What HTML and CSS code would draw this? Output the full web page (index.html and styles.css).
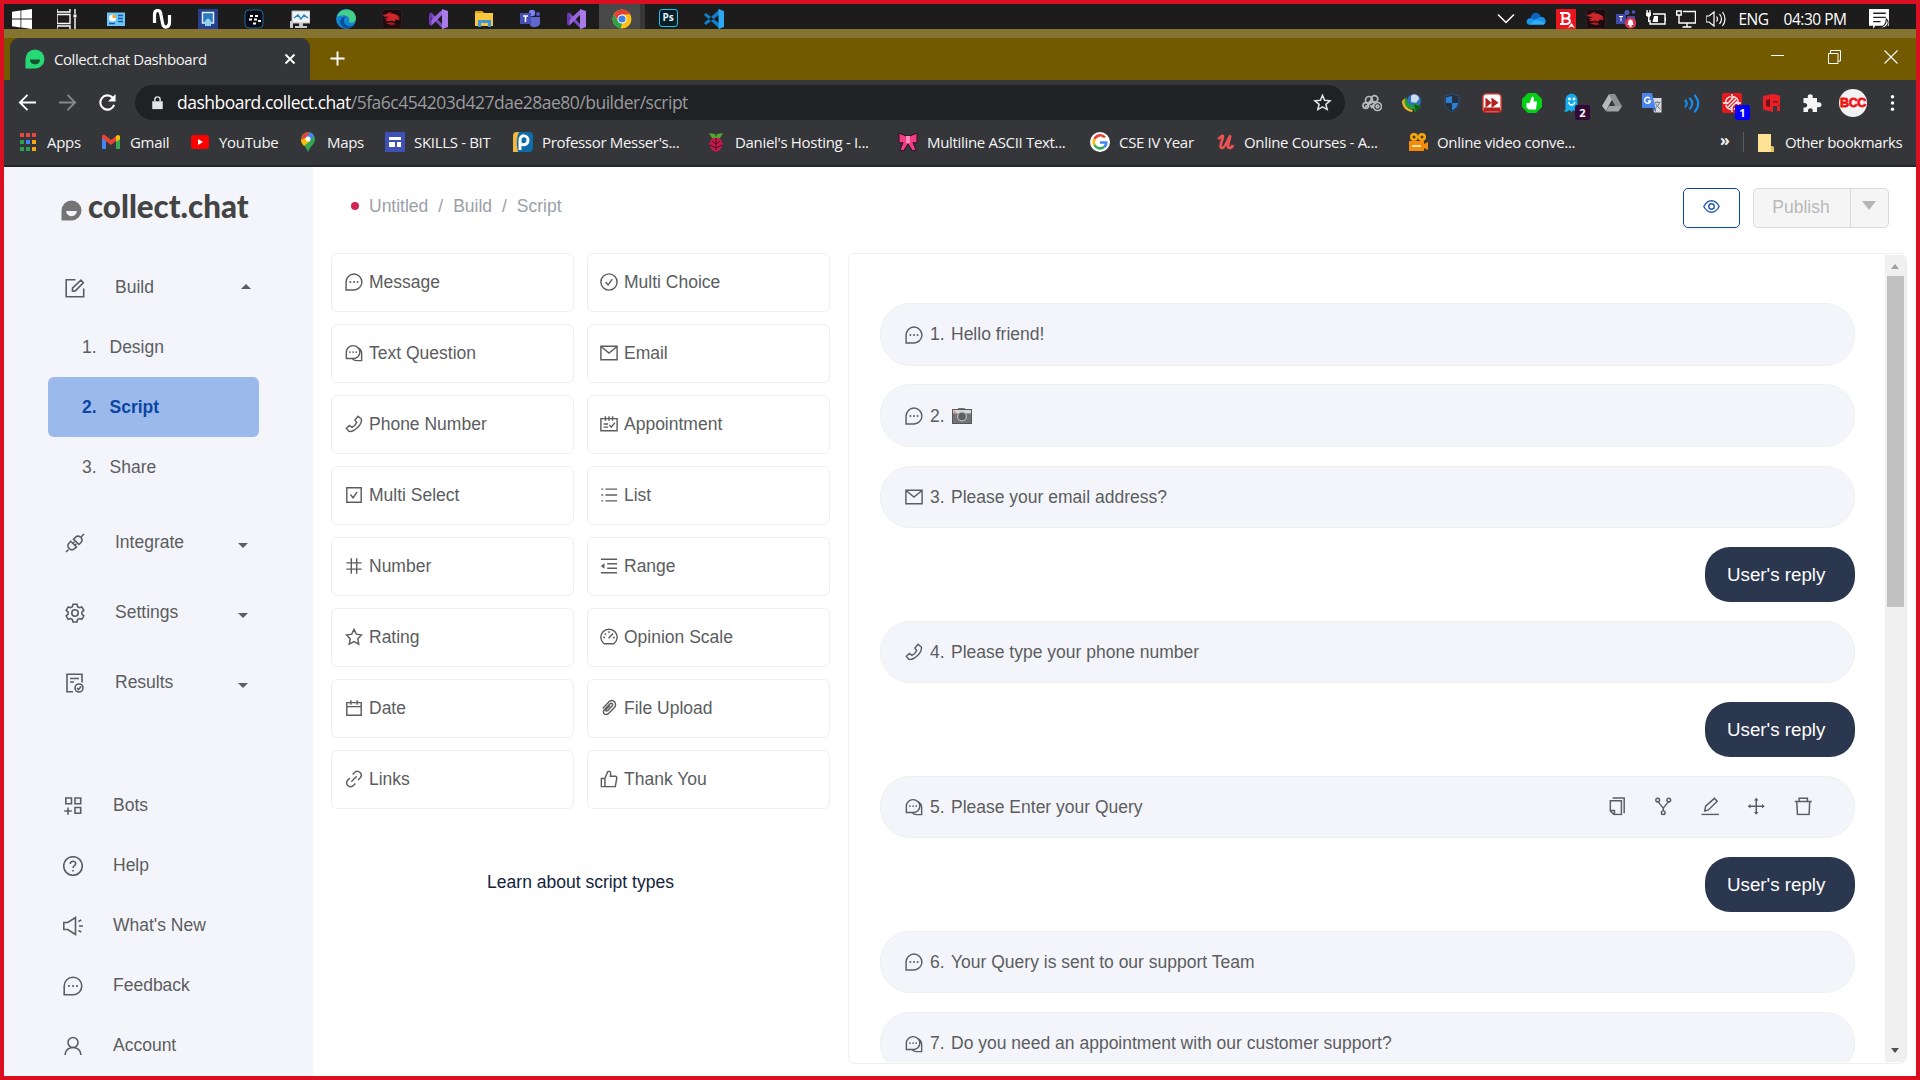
FILE: index.html
```html
<!DOCTYPE html>
<html lang="en">
<head>
<meta charset="utf-8">
<title>Collect.chat Dashboard</title>
<link rel="stylesheet" href="styles.css">
</head>
<body>
<svg class="sprite" aria-hidden="true">
  <symbol id="message" viewBox="0 0 20 20"><path d="M1.2 18.8V10a8.8 8.8 0 1 1 8.8 8.8z" class="ln"/><circle cx="6" cy="10" r="1.100" class="fl"/><circle cx="10" cy="10" r="1.100" class="fl"/><circle cx="14" cy="10" r="1.100" class="fl"/></symbol>
  <symbol id="comments" viewBox="0 0 20 20"><path d="M1.500 16.200V9.300a7.500 7.200 0 1 1 7.500 6.900zM14.500 4A8 8 0 0 1 18.500 11.500v7H13a7 6 0 0 1-5-2" class="ln"/><circle cx="5.500" cy="9" r="1" class="fl"/><circle cx="9" cy="9" r="1" class="fl"/><circle cx="12.500" cy="9" r="1" class="fl"/></symbol>
  <symbol id="check-circle" viewBox="0 0 20 20"><circle cx="10" cy="10" r="9" class="ln"/><path d="M6.300 10l2.700 3.200 4.700-6.400" class="ln"/></symbol>
  <symbol id="mail" viewBox="0 0 20 20"><path d="M1 2.500h18v15H1zM1.500 3L10 10l8.500-7" class="ln"/></symbol>
  <symbol id="phone" viewBox="0 0 20 20"><path d="M14.500 1.500l3.700 3c1.200 5.700-8 14.700-13.800 13.700l-2.900-3.400 3.500-3.100 2.800 2c2-1 4.200-3.100 5.200-5.300l-2-2.900z" class="ln"/></symbol>
  <symbol id="schedule" viewBox="0 0 20 20"><path d="M1 4h18v13.500H1zM6 1.500v5M10 1.500v5M14 1.500v5M4 10h5M4 13.500h5M10.500 11l2 2.500 4-5" class="ln"/></symbol>
  <symbol id="check-square" viewBox="0 0 20 20"><path d="M2 2h16v16H2zM6 9.500l3 3.500 4.500-6.500" class="ln"/></symbol>
  <symbol id="list" viewBox="0 0 20 20"><path d="M6 3.500h13M6 10h13M6 16.500h13M1.500 3.500h2M1.500 10h2M1.500 16.500h2" class="ln"/></symbol>
  <symbol id="number" viewBox="0 0 20 20"><path d="M1.500 6.500h17M1.500 13.500h17M7 1.500v17M13 1.500v17" class="ln"/></symbol>
  <symbol id="outdent" viewBox="0 0 20 20"><path d="M1 2.500h18M8 7.500h11M8 12.500h11M1 17.500h18" class="ln"/><path d="M1 10l4-3v6z" class="fl"/></symbol>
  <symbol id="star" viewBox="0 0 20 20"><path d="M10 1.500l2.600 5.400 5.900.8-4.300 4.200 1.100 6L10 15.100l-5.300 2.800 1.100-6L1.500 7.700l5.900-.8z" class="ln"/></symbol>
  <symbol id="gauge" viewBox="0 0 20 20"><path d="M4.500 17.500A9 9 0 1 1 15.500 17.500zM10 3.500v2M3.500 10.500h2M14.500 10.500h2M5.300 6l1.400 1.400M9.500 11.500l5-5.500" class="ln"/></symbol>
  <symbol id="calendar" viewBox="0 0 20 20"><path d="M2 4h16v14H2zM2 8.500h16M6.500 1.500v5M13.500 1.500v5" class="ln"/></symbol>
  <symbol id="clip" viewBox="0 0 20 20"><path d="M8.500 13l5-5.500c1.500-2-.8-3.700-2.300-2.200l-6.500 7c-2.500 3.700 1.500 6.500 4.500 4L16 9.500C19.500 4.500 14.500-.5 10 3L3 10.500M8.500 13c-1.600 1-2.700-.3-1.500-1.700l4-4" class="ln"/></symbol>
  <symbol id="link" viewBox="0 0 20 20"><path d="M8.500 5l2.700-2.700c3.800-3 9 2 6 6L14.500 11M11.500 15l-2.700 2.700c-3.800 3-9-2-6-6L5.500 9M7 13l6-6" class="ln"/></symbol>
  <symbol id="like" viewBox="0 0 20 20"><path d="M1.500 9.500h4l3-7.500c2-1.500 3.500 0 3.300 2L11.500 7H17c1.500 0 2 1.500 1.500 3l-1.500 8.500H1.500zM5.500 9.500V18" class="ln"/></symbol>
  <symbol id="form" viewBox="0 0 20 20"><path d="M10.500 1.800H1.200v17h17.500V10.500M7.500 13.200v-3l8.500-8 2.300 2.500-8 8.200z" class="ln"/></symbol>
  <symbol id="api" viewBox="0 0 20 20"><path d="M5.800 8.300L4 10.200c-3.500 3.300 2 8.800 5.500 5.500l2-1.800zM8.500 6.200l2-2c3.500-3.500 8.500 2 5.500 5.300l-2 2zM1 19l2.500-2.500M16.300 3.700L19 1M7.800 10.500l1.700-1.700M9.800 12.500l1.700-1.700" class="ln"/></symbol>
  <symbol id="gear" viewBox="0 0 20 20"><path d="M8 1.200h4l.6 2.500 1.800 1 2.400-.8 2 3.400-1.900 1.800v2l1.900 1.800-2 3.400-2.400-.8-1.800 1-.6 2.500H8l-.6-2.500-1.800-1-2.400.8-2-3.400 1.900-1.800v-2L1.200 7.300l2-3.400 2.400.8 1.800-1z" class="ln"/><circle cx="10" cy="10" r="3.200" class="ln"/></symbol>
  <symbol id="results" viewBox="0 0 20 20"><path d="M8 18.800H2V1.200h15v8.300M5 5.500h9M5 9h4" class="ln"/><circle cx="14" cy="15" r="4" class="ln"/><path d="M12 15l1.500 1.500 2.500-3" class="ln"/></symbol>
  <symbol id="apps" viewBox="0 0 20 20"><path d="M2.800 2h5.700v5.700H2.800zM12 2h5.700v5.700H12zM12 11.500h5.700v5.700H12zM5 11.500v7.200M1.200 15h7.500" class="ln"/></symbol>
  <symbol id="help" viewBox="0 0 20 20"><circle cx="10" cy="10" r="9.300" class="ln"/><path d="M7.300 8c0-3.800 5.600-3.500 5.400-.2C12.600 9.700 10 9.600 10 12" class="ln"/><circle cx="10" cy="14.700" r=".9" class="fl"/></symbol>
  <symbol id="horn" viewBox="0 0 20 20"><path d="M.8 6.500h4L12.500 1.500v17l-7.700-5h-4zM16 10h4M15.500 5.500L18.300 4M15.500 14.500l2.800 1.500" class="ln"/></symbol>
  <symbol id="user" viewBox="0 0 20 20"><circle cx="10" cy="6.500" r="5" class="ln"/><path d="M2 19c0-10 16-10 16 0" class="ln"/></symbol>
  <symbol id="eye" viewBox="0 0 20 20"><path d="M1 10c4.500-9 13.500-9 18 0-4.500 9-13.500 9-18 0z" class="ln"/><circle cx="10" cy="10" r="3.200" class="ln"/></symbol>
  <symbol id="copy" viewBox="0 0 20 20"><path d="M2.500 4h12v15h-8l-4-4zM2.500 14.500h4.500V19M5 1.200h12.500V17.500" class="ln"/></symbol>
  <symbol id="branch" viewBox="0 0 20 20"><circle cx="4" cy="3.300" r="2" class="ln"/><circle cx="16" cy="3.300" r="2" class="ln"/><circle cx="10" cy="17" r="2" class="ln"/><path d="M4.500 5.300L10 12l5.500-6.700M10 12v3" class="ln"/></symbol>
  <symbol id="edit" viewBox="0 0 20 20"><path d="M.5 18.800h19M4 15l1-5 9.500-8.500 3 3L8 14z" class="ln"/></symbol>
  <symbol id="move" viewBox="0 0 20 20"><path d="M10 2v16M2 10h16" class="ln"/><path d="M10 .8l2.500 3h-5zM10 19.200l2.500-3h-5zM.8 10l3-2.500v5zM19.200 10l-3-2.500v5z" class="fl"/></symbol>
  <symbol id="trash" viewBox="0 0 20 20"><path d="M.8 4.800h18.400M3 4.800l.7 14h12.600l.7-14M5.500 4.500V1.300h9v3.200" class="ln"/></symbol>
  <symbol id="vs" viewBox="0 0 20 20"><path d="M1 5l2.500-1.500 11 12L20 17.500 15 20 1 6z" fill="#7a4bc0"/><path d="M1 15l2.500 1.500L15 5V0L1 13z" fill="#9a66e0"/><path d="M1 5v10l2.500 1.500v-13z" fill="#6a35b0"/><path d="M14 0l6 2v16l-6 2z" fill="#a87be8"/></symbol>
  <symbol id="dragon" viewBox="0 0 20 20"><rect x=".5" y=".5" width="19" height="19" rx="2.500" fill="#1c0c0f" stroke="#38191c"/><path d="M1 6c4 0 5-3 9-3l-2 1.500c4-.5 8 1.500 10 4l-3 0c2 .5 2 1.500 3 2.500l-5-.500c1 2-1 2.500-2 1.500-3-1-5 1-8 0l3-1.500-4-.500 5-2-5-.500z" fill="#d2262c"/><path d="M4 15c3-3 9-2 10 1-2-1-3 0-4 .5-2-1.500-4-1.500-6-1.500z" fill="#a81c22"/></symbol>
  <symbol id="bubble" viewBox="0 0 20 20"><path d="M.5 19.500V10A9.500 9.500 0 1 1 10 19.500z" fill="currentColor"/><path d="M5 10.500h10c0 6.500-10 6.500-10 0z" fill="var(--mouth)"/></symbol>
</svg>

<div class="screen">
  <div class="taskbar">
    <div class="tasks">
      <span class="task start"><svg viewBox="0 0 20 20"><path d="M0 2.800l8.500-1.200v8H0zM9.300 1.500L20 0v9.600H9.300zM0 10.400h8.500v8L0 17.200zM9.300 10.400H20V20L9.300 18.500z" fill="#fff"/></svg></span>
      <span class="task view"><svg viewBox="0 0 20 20"><path d="M0 0v3h13V0M0 20v-3h13v3M0 5.500h13v9H0zM18 0v5M18 9v11" fill="none" stroke="#fff" stroke-width="1.400"/><path d="M16.500 5.500h3v3h-3z" fill="#fff"/></svg></span>
      <span class="task"><svg viewBox="0 0 20 20"><path d="M1 3.500h18v13.500H1z" fill="#6cc5f4"/><circle cx="6.500" cy="9" r="3.500" fill="#fff"/><path d="M6.500 9V5.500A3.500 3.500 0 0 1 10 9z" fill="#f3a51e"/><path d="M12 6.500h5M12 9.500h5M12 12.500h5M3 14.500h6" stroke="#155a9c" stroke-width="1.300"/></svg></span>
      <span class="task"><svg viewBox="0 0 20 20"><path d="M2.500 14V6c0-6 6-6 6.500 0l1.500 8c1 6 7 5 7-1V6" fill="none" stroke="#fff" stroke-width="3.200"/></svg></span>
      <span class="task"><svg viewBox="0 0 20 20"><path d="M0 0h20v20H0z" fill="#273f8f"/><path d="M4.500 3.500h11V14h-11z" fill="#2a77bd" stroke="#dcebfa" stroke-width="1.500"/><path d="M7 17v-5l3-3 3 3v5z" fill="#8fd3f0"/></svg></span>
      <span class="task"><svg viewBox="0 0 20 20"><rect x="1" y="1" width="18" height="18" rx="4" fill="#080b16" stroke="#21659a"/><path d="M6 6h3v2H6zM11 6h3v2h-3zM5 9.500h3v2H5zM10 9.500h3v2h-3zM14 11h3v2h-3zM9 13.500h3v2H9z" fill="#fff"/></svg></span>
      <span class="task"><svg viewBox="0 0 20 20"><path d="M2 2h18v12H2z" fill="#f2f2f2" stroke="#b9b9b9"/><path d="M4 9l4-3 3 4 3-4 4 3" fill="none" stroke="#2587c9" stroke-width="1.500"/><path d="M9 14h4v3h4v2H5v-2h4zM0 12h3v7H0z" fill="#c7cbcd"/></svg></span>
      <span class="task"><svg viewBox="0 0 20 20"><circle cx="10" cy="10" r="10" fill="#1684cf"/><path d="M1 8C4-2 19-2 20 9c0 5-7 6-7 3 2-5-6-8-12-4z" fill="#45cf8b"/><path d="M8 10c-1 6 5 9 9 6-4 7-14 2-13-4 1-4 5-5 7-4-2 0-3 1-3 2z" fill="#0b4f9e"/></svg></span>
      <span class="task"><svg><use href="#dragon"/></svg></span>
      <span class="task"><svg><use href="#vs"/></svg></span>
      <span class="task"><svg viewBox="0 0 20 20"><path d="M1 2h7l2 2h9v13H1z" fill="#f9c73d"/><path d="M1 2h7l1.500 2H1z" fill="#e49b0e"/><path d="M4 18v-7h13v7h-3v-4H7v4z" fill="#3f93dd"/></svg></span>
      <span class="task"><svg viewBox="0 0 20 20"><circle cx="12" cy="4" r="3.200" fill="#7b83eb"/><circle cx="18" cy="5" r="2" fill="#5059c9"/><path d="M10 8h10v6c0 4-8 6-10 2z" fill="#6068cf"/><path d="M0 4h11v11H0z" fill="#464eb8"/><path d="M3 7h5M5.500 7v6" stroke="#fff" stroke-width="1.500"/></svg></span>
      <span class="task"><svg><use href="#vs"/></svg></span>
      <span class="task task-active"><svg viewBox="0 0 20 20"><circle cx="10" cy="10" r="9.500" fill="#fbc116"/><path d="M1.800 5.200A9.500 9.500 0 0 1 18.200 5.200L10 5.500 6 12z" fill="#e34133"/><path d="M1.800 5.200L6 12.300 10 14.500 8.700 19.400A9.500 9.500 0 0 1 1.800 5.200z" fill="#2da04b"/><circle cx="10" cy="10" r="4.600" fill="#fff"/><circle cx="10" cy="10" r="3.600" fill="#3f7fe8"/></svg></span>
      <span class="task"><span class="ps">Ps</span></span>
      <span class="task"><svg viewBox="0 0 20 20"><path d="M0 6l2-2 14 11v5zM0 14l2 2L16 5V0z" fill="#1180cb"/><path d="M14.500 0L20 2v16l-5.500 2z" fill="#2fa8f3"/></svg></span>
    </div>
    <div class="tray">
      <span class="tray-cell"><svg viewBox="0 0 20 20"><path d="M2 5.500l8 8 8-8" fill="none" stroke="#fff" stroke-width="1.500"/></svg></span>
      <span class="tray-cell"><svg viewBox="0 0 20 20"><path d="M3 15.500c-4-1-3-7 1.500-6.500C6 2.500 13 2 15 8c5 0 6 6 2.500 7.500z" fill="#0c63bd"/><path d="M3 15.500c-3-.5-3-5 1-6l5 1 6-2.500c5 0 6 6 2.500 7.500z" fill="#1f93e4"/><path d="M3 15.500l7-4.500 9 3-1.500 1.500z" fill="#2fb0f5"/></svg></span>
      <span class="tray-cell"><svg viewBox="0 0 20 20"><path d="M0 0h20v20H0z" fill="#e8171f"/><path d="M4 4h6.500c4 0 4 5 0 5.500 5 .5 4 5.500 0 5.500H4M6.500 4v11M6.500 9.500h4" fill="none" stroke="#fff" stroke-width="2"/><path d="M12 19l3.500-5 3.500 5-3.500-1.500z" fill="#fff"/></svg></span>
      <span class="tray-cell"><svg><use href="#dragon"/></svg></span>
      <span class="tray-cell"><svg viewBox="0 0 20 20"><circle cx="11" cy="3.500" r="2.500" fill="#4e56c0"/><circle cx="17.500" cy="3" r="1.800" fill="#4e56c0"/><path d="M0 5h10v10H0zM11 7h8v7h-8z" fill="#4048a8"/><path d="M3 7.500h4M5 7.500v5" stroke="#fff"/><circle cx="14.500" cy="14" r="5.800" fill="#d1344e"/><path d="M11.300 16c1.200-1 0-5.500 3.200-5.500s2 4.500 3.200 5.500z" fill="#fff"/><circle cx="14.500" cy="17" r="1.200" fill="#fff"/></svg></span>
      <span class="tray-cell"><svg viewBox="0 0 20 20"><path d="M7 5h12v10H4v-4" fill="none" stroke="#fff" stroke-width="1.400"/><path d="M19 8.500h1.500v3.500H19zM8 7h4v6H6.500zM0 3.500h5v3L3.500 8v5H2V8L0 6.500zM.5 1h1.300v3H.5zM3.300 1h1.300v3H3.300z" fill="#fff"/></svg></span>
      <span class="tray-cell"><svg viewBox="0 0 20 20"><path d="M7 2.500h12.500V14H3V8.500M11 14v3.500M6.500 18h9M.7 2h4.500v4H.7zM3 6v3" fill="none" stroke="#fff" stroke-width="1.400"/></svg></span>
      <span class="tray-cell"><svg viewBox="0 0 20 20"><path d="M0 7h3l5-4v14l-5-4H0zM10.500 7.500q2 2.500 0 5M13.500 5q4 5 0 10M16.500 3q5 7 0 14" fill="none" stroke="#fff" stroke-width="1.200"/></svg></span>
      <span class="lang">ENG</span>
      <span class="clock">04:30 PM</span>
      <span class="notice"><svg viewBox="0 0 20 20"><path d="M0 0h19v16H6l-2 3v-3H0z" fill="#fff"/><path d="M4 4h12M4 8h12M4 12h7" stroke="#222" stroke-width="1.300"/><path d="M16.500 9.500c4 4 0 10-7 8.500 5-1 7-4.500 7-8.500z" fill="#fff" stroke="#222"/></svg></span>
    </div>
  </div>

  <div class="tabstrip">
    <div class="tab">
      <svg class="tab-logo"><use href="#bubble"/></svg>
      <span class="tab-title">Collect.chat Dashboard</span>
      <svg class="tab-close" viewBox="0 0 12 12"><path d="M1.500 1.500l9 9M10.500 1.500l-9 9" stroke="#fff" stroke-width="1.900"/></svg>
    </div>
    <svg class="tab-new" viewBox="0 0 16 16"><path d="M8 .5v15M.5 8h15" stroke="#fff" stroke-width="2"/></svg>
    <div class="window-buttons">
      <svg viewBox="0 0 14 14"><path d="M1 5.500h13" stroke="#fff"/></svg>
      <svg viewBox="0 0 14 14"><path d="M1.500 3.500H11V13.500H1.500zM3.500 3.500V.5H13.500v10.500h-2.500" fill="none" stroke="#fff"/></svg>
      <svg viewBox="0 0 14 14"><path d="M.5.5l13 13M13.500.5l-13 13" stroke="#fff" stroke-width="1.100"/></svg>
    </div>
  </div>

  <div class="toolbar">
    <div class="nav">
      <svg viewBox="0 0 20 20"><path d="M19 10H3M10 2l-8 8 8 8" fill="none" stroke="#fff" stroke-width="2"/></svg>
      <svg viewBox="0 0 20 20"><path d="M1 10h16M10 2l8 8-8 8" fill="none" stroke="#85878a" stroke-width="2"/></svg>
      <svg viewBox="0 0 20 20"><path d="M17 12.500A7.500 7.500 0 1 1 15.500 5" fill="none" stroke="#fff" stroke-width="2.200"/><path d="M18.500 1v8h-8z" fill="#fff"/></svg>
    </div>
    <div class="omnibox">
      <svg class="lock" viewBox="0 0 12 16"><path d="M0 6h12v9H0z" fill="#e3e4e6"/><path d="M3 6V4c0-4 6-4 6 0v2" fill="none" stroke="#e3e4e6" stroke-width="1.600"/></svg>
      <span class="url"><span class="host">dashboard.collect.chat</span>/5fa6c454203d427dae28ae80/builder/script</span>
      <svg class="fav" viewBox="0 0 20 20"><path d="M10 2.500l2.200 5.200 5.700.5-4.300 3.700 1.300 5.500-4.900-2.900-4.900 2.900 1.300-5.500-4.300-3.700 5.700-.5z" fill="none" stroke="#e3e4e6" stroke-width="1.600"/></svg>
    </div>
    <div class="extensions">
      <span class="ext"><svg viewBox="0 0 20 20"><g fill="none" stroke="#b9babc" stroke-width="1.700"><circle cx="3.800" cy="12.500" r="2.800"/><circle cx="7" cy="7" r="3.500"/><circle cx="12.500" cy="6" r="3.300"/><circle cx="15.500" cy="13.500" r="4"/><circle cx="15.500" cy="13.500" r="1.300"/><path d="M5 11c3-2 4-3 5-5M8 13c3 0 5-2 5-5M3 14l7-5M9 15l3-2"/></g></svg></span>
      <span class="ext"><svg viewBox="0 0 20 20"><circle cx="12" cy="8" r="7" fill="#2f6fc4"/><path d="M9 3c3-3 8-1 8 3l-3 4-5-1z" fill="#c9dcea"/><path d="M2 7l3-3c-1 6 3 9 8 8l-1-3 7 5-6 5-1-3C6 17 1 13 2 7z" fill="#1f9d2f"/><path d="M0 8l3-3c-2 7 2 11 8 12l-1 2C4 18 0 14 0 8z" fill="#f0b52c"/><path d="M12 11l7 3-5 5z" fill="#0a6216"/></svg></span>
      <span class="ext"><svg viewBox="0 0 20 20"><path d="M10 1l7 2v7c0 4-3 7-7 9-4-2-7-5-7-9V3z" fill="#23303f" stroke="#284f7d"/><path d="M10 3v7H4V4.500zM10 10h6c0 3-2.500 5.500-6 7.500z" fill="#2d7fd0"/></svg></span>
      <span class="ext"><svg viewBox="0 0 20 20"><rect x=".8" y=".8" width="18.400" height="18.400" rx="3.500" fill="#fff" stroke="#c9302c" stroke-width="1.600"/><path d="M2 14.500h16v4H2z" fill="#b3201f"/><path d="M3.500 4.500l6 5.300-6 5.200zM9.500 4.500l7 5.300-7 5.200z" fill="#b3201f"/></svg></span>
      <span class="ext"><svg viewBox="0 0 20 20"><path d="M6 0h8l6 6v8l-6 6H6l-6-6V6z" fill="#05d016"/><path d="M4.500 10h3L10 3.500c2.500 0 2 3 1.500 5H15l-1 8H7l-2.500-2z" fill="#fff"/></svg></span>
      <span class="ext"><svg viewBox="0 0 20 20"><path d="M3.500 17V7.500c0-9 12-9 12 0V15l3 3-4 1-3-2-2 2-2-2-3 2-3-1z" fill="#16adef"/><circle cx="7.500" cy="6" r="1.400" fill="#fff"/><circle cx="12" cy="6" r="1.400" fill="#fff"/><path d="M6.500 9c1 4 5 4 6.500 0" fill="none" stroke="#fff" stroke-width="1.300"/></svg><b class="count count-purple">2</b></span>
      <span class="ext"><svg viewBox="0 0 20 20"><path d="M7 1h6l7 12h-7z" fill="#8d8e90"/><path d="M7 1l3 5.500L4 18 0 13z" fill="#b7b8b9"/><path d="M7 13h13l-3.500 5.500H4z" fill="#a2a3a5"/></svg></span>
      <span class="ext"><svg viewBox="0 0 20 20"><path d="M9 5h10.500v14.500H12z" fill="#d7d9dc"/><path d="M0 0h10l3.500 15H0z" fill="#4a86ea"/><path d="M10 15h3.500L14 19z" fill="#2a5bc0"/><path d="M8 5.500A3 3 0 1 0 8.500 8H6" fill="none" stroke="#fff" stroke-width="1.400"/><path d="M12.500 9.500h6M15.500 8v1.500M17.500 9.500q-1 4-4 5.500M13.500 10.500q2 4 5 5.500" fill="none" stroke="#718091"/></svg></span>
      <span class="ext"><svg viewBox="0 0 20 20"><path d="M3.500 7.500q2.500 3 0 6M8 5.500q4.500 5 0 10M13 2.500q6.500 8 0 16" fill="none" stroke="#148cf0" stroke-width="2.200" stroke-linecap="round"/></svg></span>
      <span class="ext"><svg viewBox="0 0 20 20"><rect width="20" height="20" rx="2" fill="#e3191e"/><g fill="none" stroke="#fff" stroke-width="1.300"><circle cx="10" cy="10" r="6.500" stroke-dasharray="8 2.200"/><path d="M10 1v5M10 14v5M1 10h5M14 10h5M6 14l8-8M8.500 15l6.500-6.500M5 11l6.500-6.500"/></g></svg><b class="count count-blue">1</b></span>
      <span class="ext"><svg viewBox="0 0 20 20"><path d="M1 3l10-2v18L1 16.500zM11 1l7 1.500V12h-3l3 1v5h-3v-5h-4z" fill="#ea2026"/><path d="M4 7l4-1v8l-4-1z" fill="#6f1114"/><path d="M11 8h5v1.500h-5z" fill="#7d1417"/></svg></span>
      <span class="ext"><svg viewBox="0 0 20 20"><path d="M1.500 5h4.500c-2-5 6.500-5 4.500 0H15v4.500c6-2 6 6.500 0 4.500V19h-4.500c1.500-5-5.500-5-4.500 0H1.500v-4.500c5 1 5-5.500 0-4.500z" fill="#f5f5f5"/></svg></span>
      <span class="avatar">BCC</span>
      <svg class="kebab" viewBox="0 0 4 20"><circle cx="2" cy="3" r="1.900"/><circle cx="2" cy="10" r="1.900"/><circle cx="2" cy="17" r="1.900"/></svg>
    </div>
  </div>

  <div class="bookmarks">
    <div class="bookmark-list">
      <span class="bookmark"><svg viewBox="0 0 20 20"><path d="M2 1h4v4H2zM8 1h4v4H8zM14 1h4v4h-4z" fill="#e8453c"/><path d="M2 8h4v4H2zM2 15h4v4H2zM8 15h4v4H8z" fill="#2da14c"/><path d="M8 8h4v4H8z" fill="#3f84f4"/><path d="M14 8h4v4h-4zM14 15h4v4h-4z" fill="#f8a717"/></svg>Apps</span>
      <span class="bookmark"><svg viewBox="0 0 20 20"><path d="M1 4l4 3v10H1z" fill="#4285f4"/><path d="M15 7l4-3v13h-4z" fill="#34a853"/><path d="M1 4c1-2 3-1 4 0l5 4 5-4v5l-5 4-9-7z" fill="#ea4335"/><path d="M15 4c2-2 4-1 4 1v2l-4 3z" fill="#fbbc04"/></svg>Gmail</span>
      <span class="bookmark"><svg viewBox="0 0 20 20"><rect x="1" y="3" width="18" height="14" rx="3" fill="#f00"/><path d="M8 7l5 3-5 3z" fill="#fff"/></svg>YouTube</span>
      <span class="bookmark"><svg viewBox="0 0 20 20"><path d="M10 20C8 14 3 12 3 7a7 7 0 0 1 14 0c0 5-5 7-7 13z" fill="#34a853"/><path d="M4 4a7 7 0 0 1 8-3.500L6 11C3 8 3 6 4 4z" fill="#ea4335"/><path d="M12 .5A7 7 0 0 1 16 4l-5 6-4-4z" fill="#4285f4"/><path d="M3 8l4-2 5 3-6 5C4 12 3 10 3 8z" fill="#fbbc04"/><circle cx="10" cy="7" r="2.500" fill="#fff"/></svg>Maps</span>
      <span class="bookmark"><svg viewBox="0 0 20 20"><path d="M0 0h20v20H0z" fill="#3f51b5"/><path d="M4 5h12v3H4zM4 10h6v5H4zM12 10h4v5h-4z" fill="#fff"/></svg>SKILLS - BIT</span>
      <span class="bookmark"><svg viewBox="0 0 20 20"><rect width="20" height="20" rx="4" fill="#0e6ca8"/><path d="M0 4Q0 0 4 0h2Q2 8 5 20H0z" fill="#f5b83c"/><path d="M7 18V8c0-6 8-5 8 0s-5 6-8 3" fill="none" stroke="#fff" stroke-width="3"/></svg>Professor Messer's...</span>
      <span class="bookmark"><svg viewBox="0 0 20 20"><path d="M3 1l6 1 1 3 1-3 6-1-3 5H6z" fill="#55a630"/><path d="M6 6h8l3 6-3 6-4 2-4-2-3-6z" fill="#c51a4a"/><path d="M6 9l4 3 4-3M4 13l6 3 6-3M10 6v12" fill="none" stroke="#4c0c20"/></svg>Daniel's Hosting - I...</span>
      <span class="bookmark"><svg viewBox="0 0 20 20"><path d="M1 1l7 3h4l7-3v10l-4-.5 3 7.500-3.500 1L10 12l-4.500 7L2 18l3-7.500L1 11z" fill="#f43b86" stroke="#271019"/><path d="M8 4h4v7H8z" fill="#ff8dbb"/></svg>Multiline ASCII Text...</span>
      <span class="bookmark"><svg viewBox="0 0 20 20"><circle cx="10" cy="10" r="10" fill="#fff"/><g fill="none" stroke-width="2.600"><path d="M15 5.500A6.300 6.300 0 0 0 4.500 7" stroke="#ea4335"/><path d="M4.500 7a6.300 6.300 0 0 0 0 6" stroke="#fbbc05"/><path d="M4.500 13a6.300 6.300 0 0 0 9.500 2" stroke="#34a853"/><path d="M10 10.500h6.300q0 3-2.300 4.500" stroke="#4285f4"/></g></svg>CSE IV Year</span>
      <span class="bookmark"><svg viewBox="0 0 20 20"><path d="M3 7c3-2 4-4 5-3s-5 12-1 12 7-12 8-12-4 12-1 12q3 0 4-3" fill="none" stroke="#ec5252" stroke-width="2.700"/></svg>Online Courses - A...</span>
      <span class="bookmark"><svg viewBox="0 0 20 20"><circle cx="6" cy="5" r="4" fill="#f7a70e"/><circle cx="14" cy="5" r="4" fill="#f7a70e"/><circle cx="6" cy="5" r="1.500" fill="#5a3c05"/><circle cx="14" cy="5" r="1.500" fill="#5a3c05"/><path d="M1 9h15v3l4-2v8l-4-2v3H1z" fill="#f58b0a"/><path d="M4 13h9v2H4z" fill="#ffe0b3"/></svg>Online video conve...</span>
    </div>
    <span class="more">»</span>
    <span class="bookmark other"><svg viewBox="0 0 20 20"><path d="M2 1h13v12l3 1v5H2z" fill="#fde293"/><path d="M15 13l3 1v5h-3z" fill="#e9c35b"/></svg>Other bookmarks</span>
  </div>

  <div class="page">
    <aside class="sidebar">
      <div class="brand"><svg><use href="#bubble"/></svg><span>collect.chat</span></div>
      <nav class="menu">
        <a class="menu-item build"><svg><use href="#form"/></svg><span>Build</span><i class="caret up"></i></a>
        <a class="step"><span>1.</span>Design</a>
        <a class="step active"><span>2.</span>Script</a>
        <a class="step"><span>3.</span>Share</a>
        <a class="menu-item first-group"><svg><use href="#api"/></svg><span>Integrate</span><i class="caret"></i></a>
        <a class="menu-item"><svg><use href="#gear"/></svg><span>Settings</span><i class="caret"></i></a>
        <a class="menu-item"><svg><use href="#results"/></svg><span>Results</span><i class="caret"></i></a>
      </nav>
      <nav class="links">
        <a><svg><use href="#apps"/></svg>Bots</a>
        <a><svg><use href="#help"/></svg>Help</a>
        <a><svg><use href="#horn"/></svg>What's New</a>
        <a><svg><use href="#message"/></svg>Feedback</a>
        <a><svg><use href="#user"/></svg>Account</a>
      </nav>
    </aside>

    <main class="content">
      <header class="header">
        <div class="crumbs"><i class="dot"></i><span>Untitled</span><em>/</em><span>Build</span><em>/</em><span>Script</span></div>
        <div class="header-actions">
          <button class="preview"><svg><use href="#eye"/></svg></button>
          <div class="publish"><button class="publish-main">Publish</button><button class="publish-more"><i></i></button></div>
        </div>
      </header>
      <div class="workspace">
        <section class="palette">
          <div class="types">
            <div class="type"><svg><use href="#message"/></svg>Message</div>
            <div class="type"><svg><use href="#check-circle"/></svg>Multi Choice</div>
            <div class="type"><svg><use href="#comments"/></svg>Text Question</div>
            <div class="type"><svg><use href="#mail"/></svg>Email</div>
            <div class="type"><svg><use href="#phone"/></svg>Phone Number</div>
            <div class="type"><svg><use href="#schedule"/></svg>Appointment</div>
            <div class="type"><svg><use href="#check-square"/></svg>Multi Select</div>
            <div class="type"><svg><use href="#list"/></svg>List</div>
            <div class="type"><svg><use href="#number"/></svg>Number</div>
            <div class="type"><svg><use href="#outdent"/></svg>Range</div>
            <div class="type"><svg><use href="#star"/></svg>Rating</div>
            <div class="type"><svg><use href="#gauge"/></svg>Opinion Scale</div>
            <div class="type"><svg><use href="#calendar"/></svg>Date</div>
            <div class="type"><svg><use href="#clip"/></svg>File Upload</div>
            <div class="type"><svg><use href="#link"/></svg>Links</div>
            <div class="type"><svg><use href="#like"/></svg>Thank You</div>
          </div>
          <a class="learn">Learn about script types</a>
        </section>
        <section class="script">
          <div class="flow">
            <div class="bubble"><svg><use href="#message"/></svg><span class="num">1.</span>Hello friend!</div>
            <div class="bubble"><svg><use href="#message"/></svg><span class="num">2.</span><svg class="camera" viewBox="0 0 20 16"><path d="M6 1.500V0h7v1.500z" fill="#777"/><path d="M0 1h20v15H0z" fill="#555759"/><path d="M1 2h18v3.500H1z" fill="#d8d8d8"/><path d="M1.500 3h2v2h-2z" fill="#e88080"/><path d="M1 6h18v9H1z" fill="#717375"/><circle cx="10" cy="8.500" r="5" fill="#b9babb"/><circle cx="10" cy="8.500" r="3.800" fill="#5d6062"/></svg></div>
            <div class="bubble"><svg><use href="#mail"/></svg><span class="num">3.</span>Please your email address?</div>
            <div class="reply">User's reply</div>
            <div class="bubble"><svg><use href="#phone"/></svg><span class="num">4.</span>Please type your phone number</div>
            <div class="reply">User's reply</div>
            <div class="bubble"><svg><use href="#comments"/></svg><span class="num">5.</span>Please Enter your Query
              <div class="tools"><svg><use href="#copy"/></svg><svg><use href="#branch"/></svg><svg><use href="#edit"/></svg><svg><use href="#move"/></svg><svg><use href="#trash"/></svg></div>
            </div>
            <div class="reply">User's reply</div>
            <div class="bubble"><svg><use href="#message"/></svg><span class="num">6.</span>Your Query is sent to our support Team</div>
            <div class="bubble"><svg><use href="#comments"/></svg><span class="num">7.</span>Do you need an appointment with our customer support?</div>
          </div>
          <div class="scrollbar"><i class="arrow-up"></i><div class="thumb"></div><i class="arrow-down"></i></div>
        </section>
      </div>
    </main>
  </div>
</div>
</body>
</html>
```
FILE: styles.css
```css
* { box-sizing: border-box; }
body { margin: 0; background: #da0f22; color: #5b5d60; font: 17.5px/24px "Liberation Sans", Arial, sans-serif; }
svg { display: block; flex: none; }
.sprite { position: absolute; width: 0; height: 0; }
.ln { fill: none; stroke: currentColor; stroke-width: 1.6; }
.fl { fill: currentColor; }
button { font: inherit; padding: 0; margin: 0; }

.screen { width: 1920px; height: 1080px; border: 4px solid #da0f22; overflow: hidden; display: flex; flex-direction: column; }

/* Windows taskbar */
.taskbar { height: 25px; flex: none; background: #1c1c1c; color: #fff; display: flex; justify-content: space-between; overflow: hidden; }
.tasks, .tray { display: flex; height: 30px; }
.task { width: 46px; display: flex; justify-content: center; padding-top: 5px; }
.task svg { width: 20px; height: 20px; }
.task.start { width: 36px; }
.task.view { width: 53px; }
.task-active { background: #484848; border-right: 5px solid #383838; padding-left: 5px; }
.ps { width: 19px; height: 18px; border: 1.500px solid #26c0ee; border-radius: 3px; background: #061e26; color: #e0f7ff; font: bold 10px/14px "Open Sans", sans-serif; text-align: center; }
.tray { font: 15.500px/31px "Open Sans", sans-serif; letter-spacing: -.5px; padding-right: 12px; }
.tray-cell { width: 30px; display: flex; justify-content: center; padding-top: 5px; }
.tray-cell svg { width: 20px; height: 20px; }
.lang { width: 45px; text-align: center; }
.clock { width: 78px; text-align: center; }
.notice { width: 50px; padding: 5px 0 0 15px; }
.notice svg { width: 21px; height: 21px; }

/* Browser frame */
.tabstrip { height: 51px; flex: none; background: #735a00; border-top: 9px solid #877330; display: flex; padding-left: 6px; }
.tab { width: 300px; height: 42px; background: #35363a; border-radius: 9px 9px 0 0; display: flex; align-items: center; padding: 0 14px 0 15px; color: #f3f3f3; font: 15px/20px "Open Sans", sans-serif; }
.tab-logo { width: 20px; height: 20px; color: #26d876; --mouth: #14532f; }
.tab-title { margin: -1px 0 0 9px; flex: 1; letter-spacing: -.44px; white-space: nowrap; }
.tab-close { width: 12px; height: 12px; }
.tab-new { width: 15px; height: 15px; margin: 13px 0 0 20px; }
.window-buttons { margin-left: auto; display: flex; gap: 43px; padding: 12px 18px 0 0; }
.window-buttons svg { width: 14px; height: 14px; }
.toolbar { height: 40px; flex: none; background: #35363a; display: flex; padding-top: 5px; }
.nav { width: 131px; display: flex; gap: 20px; padding: 8px 0 0 14px; }
.nav svg { width: 19px; height: 19px; }
.nav svg + svg { margin-left: 1px; }
.omnibox { width: 1210px; height: 35px; border-radius: 18px; background: #202124; display: flex; align-items: center; padding: 0 13px 0 17px; }
.lock { width: 11px; height: 14px; }
.url { flex: 1; margin: -1px 0 0 14px; color: #999b9e; font: 17.500px/30px "Open Sans", sans-serif; letter-spacing: -.5px; }
.host { color: #fff; }
.fav { width: 19px; height: 19px; }
.extensions { display: flex; align-items: center; height: 35px; padding-left: 7px; }
.ext { width: 40px; display: flex; justify-content: center; position: relative; }
.ext svg { width: 20px; height: 20px; }
.count { position: absolute; left: 23px; top: 12px; width: 15px; height: 15px; border-radius: 2px; color: #fff; font: bold 11px/15px "Open Sans", sans-serif; text-align: center; }
.count-purple { background: #330a35; }
.count-blue { background: #0000fa; }
.avatar { width: 28px; height: 28px; margin: 0 0 0 7px; border-radius: 50%; background: #f2f2f2; color: #f01414; font: 900 12.500px/28px "Liberation Sans", sans-serif; text-align: center; letter-spacing: -.3px; -webkit-text-stroke: .8px #f01414; }
.kebab { width: 5px; height: 18px; margin-left: 23px; fill: #fff; }
.bookmarks { height: 47px; flex: none; background: #35363a; border-bottom: 2px solid #262629; display: flex; color: #f5f5f5; font: 15px/20px "Open Sans", sans-serif; letter-spacing: -.32px; padding: 0 0 2px 14px; }
.bookmark-list { display: grid; grid-template-columns: 83px 89px 108px 87px 128px 193px 192px 192px 125px 193px 304px; }
.bookmark { display: flex; align-items: center; gap: 9px; white-space: nowrap; }
.bookmark svg { width: 20px; height: 20px; margin-top: 1px; }
.more { width: 31px; line-height: 40px; padding-left: 8px; font-weight: bold; font-size: 16px; }
.other { height: 20px; margin-top: 12px; border-left: 1px solid #5c5d61; padding-left: 12px; letter-spacing: -.4px; }

/* Application */
.page { flex: 1; min-height: 0; display: flex; background: #fff; }
.sidebar { width: 309px; background: #f4f5fa; padding: 23px 0 0 44px; }
.brand { display: flex; align-items: flex-start; height: 67px; padding: 0 0 0 13px; color: #444; font: 900 31.300px/32px Lato, sans-serif; }
.brand svg { width: 21px; height: 21px; margin: 10px 6px 0 0; color: #747474; --mouth: #f4f5fa; }
.menu { display: flex; flex-direction: column; }
.menu-item { height: 70px; width: 211px; display: flex; align-items: center; padding: 0 11px 0 17px; }
.menu-item svg { width: 20px; height: 20px; margin-top: 2px; }
.menu-item span { margin-left: 30px; flex: 1; }
.caret { border: 5.500px solid transparent; border-top-color: #5b5d60; border-bottom: 0; margin-top: 7px; }
.caret.up { border: 5.500px solid transparent; border-bottom-color: #5b5d60; border-top: 0; margin: -1px -3px 0 0; }
.build { height: 60px; }
.step { height: 60px; width: 211px; display: flex; align-items: center; padding-left: 34px; border-radius: 6px; }
.step span { width: 27.500px; }
.step.active { background: #9bb9ea; color: #0b46a4; font-weight: bold; }
.first-group { margin-top: 10px; }
.links { margin-top: 58px; }
.links a { height: 60px; display: flex; align-items: center; gap: 30px; padding-left: 15px; }
.links svg { width: 20px; height: 20px; margin-top: 2px; }
.content { flex: 1; padding-right: 9px; }
.header { height: 86px; display: flex; justify-content: space-between; padding: 21px 18px 0 38px; }
.crumbs { display: flex; height: 36px; align-items: center; color: #9aa0a8; }
.dot { width: 8px; height: 8px; border-radius: 50%; background: #d42455; margin-right: 10px; }
.crumbs em { font-style: normal; width: 24.800px; text-align: center; }
.header-actions { display: flex; gap: 13px; }
.preview { width: 57px; height: 40px; border: 1px solid #0b46a4; border-radius: 5px; background: #fff; color: #2458b0; display: flex; align-items: center; justify-content: center; box-shadow: 0 2px 1px #0000000a; }
.preview svg { width: 17px; height: 17px; margin-top: -3px; }
.publish { display: flex; border: 1px solid #d9d9d9; border-radius: 5px; background: #f5f5f5; height: 40px; width: 136px; }
.publish-main { width: 96px; border: 0; background: none; color: #b9b9b9; padding: 0 2px 2px 0; }
.publish-more { flex: 1; border: 0; border-left: 1px solid #d9d9d9; background: none; display: flex; justify-content: center; align-items: center; padding: 0 1px 5px 0; }
.publish-more i { border: 7px solid transparent; border-top: 9px solid #b5b5b5; border-bottom: 0; }
.workspace { display: flex; padding-left: 18px; gap: 18px; }
.palette { width: 499px; }
.types { display: grid; grid-template-columns: 243px 243px; gap: 12px 13px; }
.type { height: 59px; border: 1px solid #efefef; border-radius: 6px; display: flex; align-items: center; gap: 6px; padding: 0 0 1px 13px; }
.type:nth-child(even) { padding-left: 12px; }
.type svg { width: 18px; height: 18px; margin-top: -1px; }
.learn { display: block; text-align: center; margin-top: 61px; color: #14233b; }
.script { width: 1059px; height: 811px; border: 1px solid #efefef; border-radius: 7px; display: flex; overflow: hidden; padding: 1px 0; }
.flow { width: 1036px; height: 807px; overflow: hidden; padding: 48px 30px 0 31px; display: flex; flex-direction: column; gap: 18.75px; }
.bubble { height: 62.500px; flex: none; border: 1px solid #efefef; border-radius: 30px; background: #f4f5fa; display: flex; align-items: center; padding: 0 42px 0 24px; white-space: nowrap; }
.bubble svg { width: 18px; height: 18px; margin-top: 1px; }
.num { width: 21px; margin-left: 7px; }
.bubble .camera { width: 20px; height: 16px; margin-left: 1px; }
.tools { margin-left: auto; display: flex; gap: 28px; }
.bubble .tools svg { width: 18.500px; height: 18.500px; margin: -1px 0 0; }
.reply { height: 55px; flex: none; width: 150px; align-self: flex-end; border-radius: 25px; background: #2b374f; color: #fff; font-size: 18.75px; line-height: 55px; padding-left: 22px; }
.scrollbar { flex: 1; background: #f0f0f0; display: flex; flex-direction: column; align-items: center; padding: 9px 1px 9px 0; }
.thumb { width: 17px; height: 331px; background: #c1c1c1; margin: 7px 0 auto; }
.arrow-up { border: 4.500px solid transparent; border-top: 0; border-bottom: 5px solid #a0a0a0; }
.arrow-down { border: 4.500px solid transparent; border-bottom: 0; border-top: 5px solid #505050; }
```
